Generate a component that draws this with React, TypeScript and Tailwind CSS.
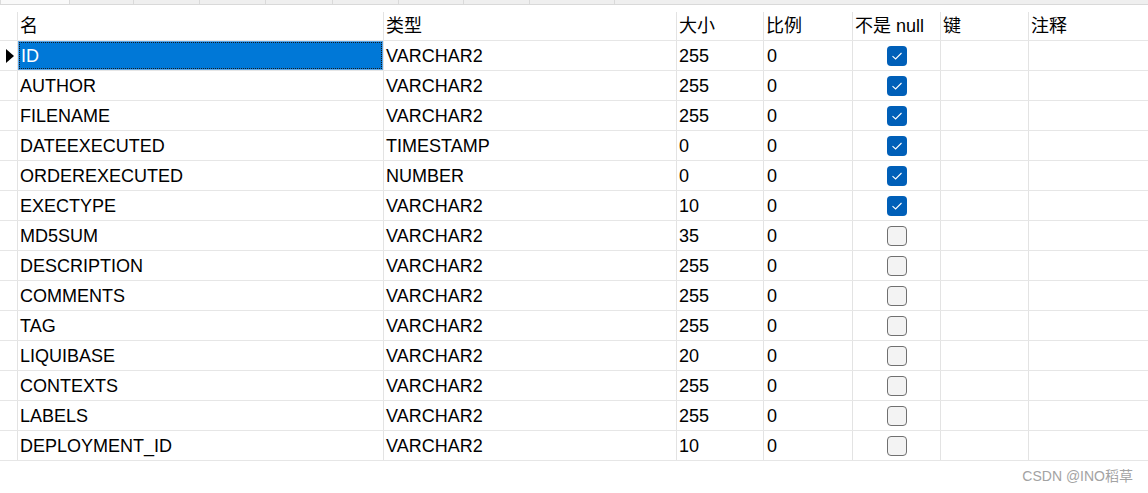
import React from "react";

type Row = { name: string; type: string; size: string; ratio: string; notNull: boolean };

const rows: Row[] = [
  { name: "ID", type: "VARCHAR2", size: "255", ratio: "0", notNull: true },
  { name: "AUTHOR", type: "VARCHAR2", size: "255", ratio: "0", notNull: true },
  { name: "FILENAME", type: "VARCHAR2", size: "255", ratio: "0", notNull: true },
  { name: "DATEEXECUTED", type: "TIMESTAMP", size: "0", ratio: "0", notNull: true },
  { name: "ORDEREXECUTED", type: "NUMBER", size: "0", ratio: "0", notNull: true },
  { name: "EXECTYPE", type: "VARCHAR2", size: "10", ratio: "0", notNull: true },
  { name: "MD5SUM", type: "VARCHAR2", size: "35", ratio: "0", notNull: false },
  { name: "DESCRIPTION", type: "VARCHAR2", size: "255", ratio: "0", notNull: false },
  { name: "COMMENTS", type: "VARCHAR2", size: "255", ratio: "0", notNull: false },
  { name: "TAG", type: "VARCHAR2", size: "255", ratio: "0", notNull: false },
  { name: "LIQUIBASE", type: "VARCHAR2", size: "20", ratio: "0", notNull: false },
  { name: "CONTEXTS", type: "VARCHAR2", size: "255", ratio: "0", notNull: false },
  { name: "LABELS", type: "VARCHAR2", size: "255", ratio: "0", notNull: false },
  { name: "DEPLOYMENT_ID", type: "VARCHAR2", size: "10", ratio: "0", notNull: false },
];

const tabs = [69, 64, 66, 66, 67, 66, 65, 66, 85];

function Checkbox({ checked }: { checked: boolean }) {
  if (checked) {
    return (
      <div className="w-[20px] h-[20px] rounded-[4px] bg-[#005fb8] flex items-center justify-center">
        <svg width="12" height="10" viewBox="0 0 12 10">
          <path d="M1.5 5.2 L4.6 8 L10.5 2" fill="none" stroke="#ffffff" strokeWidth="1.1" />
        </svg>
      </div>
    );
  }
  return <div className="w-[20px] h-[20px] rounded-[4px] bg-[#f3f3f3] border border-[#707070]" />;
}

export default function App() {
  const font = { fontFamily: '"Liberation Sans", "Noto Sans CJK SC", Arial, sans-serif' };
  return (
    <div className="w-[1148px] h-[493px] bg-white text-black overflow-hidden" style={font}>
      <div className="h-[5px] flex bg-[#efefef] border-b border-[#d9d9d9]">
        <div className="w-[1px] bg-[#dcdcdc]" />
        {tabs.map((w, i) => (
          <div
            key={i}
            className={`h-full border-r border-[#dadada] ${i === 0 ? "bg-[#f9f9f9]" : "bg-[#efefef]"}`}
            style={{ width: w }}
          />
        ))}
      </div>
      <div className="h-[7px]" />
      <div className="flex h-[29px] border-b border-[#e6e6e6] text-[18px] leading-none">
        <div className="w-[18px] border-r border-[#e3e3e3]" />
        <div className="w-[366px] border-r border-[#e3e3e3] flex items-center pl-[2px]">名</div>
        <div className="w-[293px] border-r border-[#e3e3e3] flex items-center pl-[2px]">类型</div>
        <div className="w-[87px] border-r border-[#e3e3e3] flex items-center pl-[2px]">大小</div>
        <div className="w-[89px] border-r border-[#e3e3e3] flex items-center pl-[2px]">比例</div>
        <div className="w-[88px] border-r border-[#e3e3e3] flex items-center pl-[2px]">不是 null</div>
        <div className="w-[88px] border-r border-[#e3e3e3] flex items-center pl-[2px]">键</div>
        <div className="flex-1 flex items-center pl-[2px]">注释</div>
      </div>
      {rows.map((r, i) => (
        <div key={r.name} className="flex h-[30px] border-b border-[#e6e6e6] text-[18px] leading-none">
          <div className="w-[18px] border-r border-[#e3e3e3] flex items-center pl-[6px]">
            {i === 0 && (
              <svg width="8" height="14" viewBox="0 0 8 14">
                <polygon points="0,0 8,7 0,14" fill="#000000" />
              </svg>
            )}
          </div>
          <div className="w-[366px] border-r border-[#e3e3e3] flex">
            {i === 0 ? (
              <div className="flex-1 bg-[#0078d7] border border-[#5aa5e6] flex">
                <div className="flex-1 border border-dotted border-[#1a1a1a] flex items-center pl-[1px] text-white">
                  {r.name}
                </div>
              </div>
            ) : (
              <div className="flex-1 flex items-center pl-[2px]">{r.name}</div>
            )}
          </div>
          <div className="w-[293px] border-r border-[#e3e3e3] flex items-center pl-[2px]">{r.type}</div>
          <div className="w-[87px] border-r border-[#e3e3e3] flex items-center pl-[2px]">{r.size}</div>
          <div className="w-[89px] border-r border-[#e3e3e3] flex items-center pl-[3px]">{r.ratio}</div>
          <div className="w-[88px] border-r border-[#e3e3e3] flex items-center justify-center">
            <Checkbox checked={r.notNull} />
          </div>
          <div className="w-[88px] border-r border-[#e3e3e3]" />
          <div className="flex-1" />
        </div>
      ))}
      <div className="flex justify-end pr-[15px] pt-[8px]">
        <span className="text-[14px] leading-none text-[#a3a3a3]">CSDN @INO稻草</span>
      </div>
    </div>
  );
}
